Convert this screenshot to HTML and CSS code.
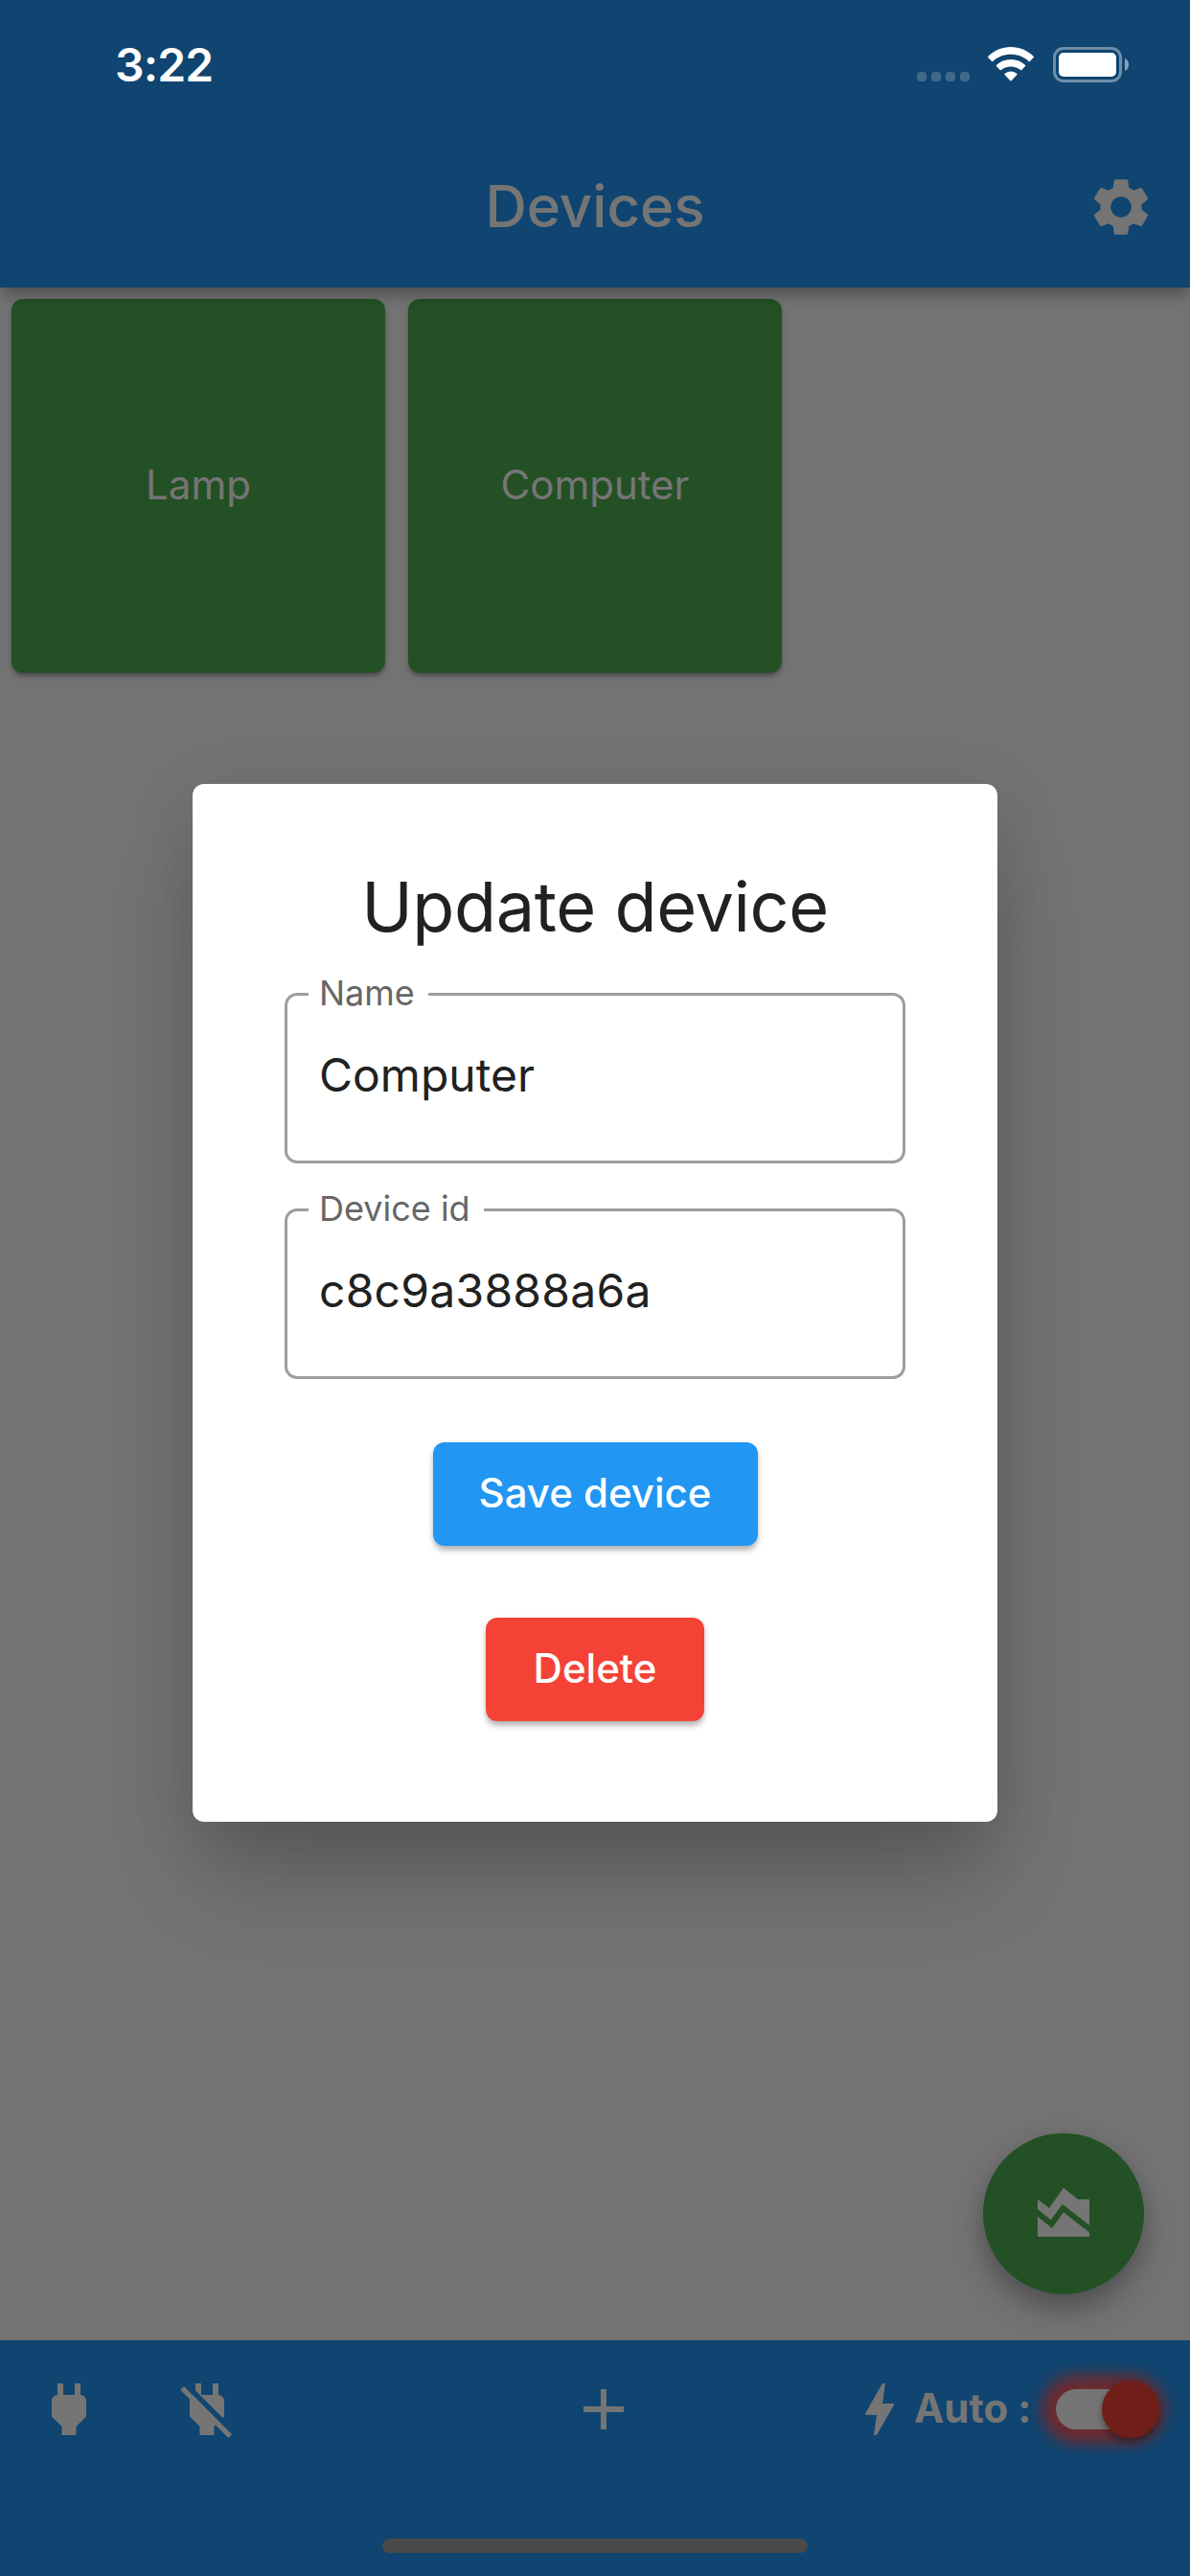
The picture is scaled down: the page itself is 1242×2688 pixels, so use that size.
FILE: index.html
```html
<!DOCTYPE html>
<html lang="en">
<head>
<meta charset="utf-8">
<title>Devices</title>
<link rel="stylesheet" href="styles.css">
</head>
<body>
<div class="app">
  <header class="app-bar">
    <span class="app-bar-side"></span>
    <h1 class="app-title">Devices</h1>
    <span class="app-bar-side app-bar-actions">
      <svg class="icon" viewBox="0 0 24 24"><path d="M19.14 12.94c.04-.3.06-.61.06-.94 0-.32-.02-.64-.07-.94l2.03-1.58c.18-.14.23-.41.12-.61l-1.92-3.32c-.12-.22-.37-.29-.59-.22l-2.39.96c-.5-.38-1.03-.7-1.62-.94l-.36-2.54c-.04-.24-.24-.41-.48-.41h-3.84c-.24 0-.43.17-.47.41l-.36 2.54c-.59.24-1.13.57-1.62.94l-2.39-.96c-.22-.08-.47 0-.59.22L2.74 8.87c-.12.21-.08.47.12.61l2.03 1.58c-.05.3-.09.63-.09.94s.02.64.07.94l-2.03 1.58c-.18.14-.23.41-.12.61l1.92 3.32c.12.22.37.29.59.22l2.39-.96c.5.38 1.03.7 1.62.94l.36 2.54c.05.24.24.41.48.41h3.84c.24 0 .44-.17.47-.41l.36-2.54c.59-.24 1.13-.56 1.62-.94l2.39.96c.22.08.47 0 .59-.22l1.92-3.32c.12-.22.07-.47-.12-.61l-2.01-1.58zM12 15.6c-1.98 0-3.6-1.62-3.6-3.6s1.62-3.6 3.6-3.6 3.6 1.62 3.6 3.6-1.62 3.6-3.6 3.6z"/></svg>
    </span>
  </header>

  <main class="device-grid">
    <button class="device-card">Lamp</button>
    <button class="device-card">Computer</button>
  </main>

  <button class="fab">
    <svg class="icon" viewBox="0 0 24 24"><path d="M3 13v7h18v-1.5l-9-7L8 17l-5-4zm0-6l4 3 5-7 5 4h4v8.970l-9.400-7.310-3.980 5.480L3 10.440V7z"/></svg>
  </button>

  <footer class="bottom-bar">
    <div class="bar-group bar-left">
      <svg class="icon" viewBox="0 0 24 24"><path d="M16.01 7L16 3h-2v4h-4V3H8v4h-.01C7 6.99 6 7.99 6 8.99v5.49L9.5 18v3h5v-3l3.5-3.51v-5.5c0-1-1-2-1.99-1.99z"/></svg>
      <svg class="icon" viewBox="0 0 24 24"><path d="M18 14.49V9c0-1-1.01-2.01-2-2V3h-2v4h-4V3H8v2.48l9.51 9.5.49-.49zm-1.76 1.77L7.2 7.2l-.01.01L3.98 4 2.71 5.25l3.36 3.36C6.04 8.74 6 8.87 6 9v5.48L9.5 18v3h5v-3l.48-.48L19.45 22l1.26-1.28-4.47-4.46z"/></svg>
    </div>
    <svg class="icon bar-add" viewBox="0 0 24 24"><path d="M19 13h-6v6h-2v-6H5v-2h6V5h2v6h6v2z"/></svg>
    <div class="bar-group bar-auto">
      <svg class="icon" viewBox="0 0 24 24"><path d="M11 21h-1l1-7H7.500c-.58 0-.57-.32-.38-.66.19-.34.05-.08.07-.12C8.48 10.94 10.42 7.54 13 3h1l-1 7h3.500c.49 0 .56.33.47.51l-.07.15C12.96 17.55 11 21 11 21z"/></svg>
      <span class="auto-label">Auto :</span>
      <span class="switch"><span class="switch-track"><span class="switch-thumb"></span></span></span>
    </div>
  </footer>
</div>

<div class="scrim">
  <section class="dialog">
    <h2 class="dialog-title">Update device</h2>
    <fieldset class="field">
      <legend class="field-label">Name</legend>
      <div class="field-value">Computer</div>
    </fieldset>
    <fieldset class="field">
      <legend class="field-label">Device id</legend>
      <div class="field-value field-value-id">c8c9a3888a6a</div>
    </fieldset>
    <button class="button button-save">Save device</button>
    <button class="button button-delete">Delete</button>
  </section>
</div>

<div class="status-bar">
  <span class="clock">3:22</span>
  <span class="status-icons">
    <span class="cell"><i></i><i></i><i></i><i></i></span>
    <svg class="wifi" viewBox="0 0 48 36"><path d="M24 0C33.200 0 41.500 3.700 47.600 9.700Q48.300 10.400 47.700 11.100L43.900 14.900Q43.300 15.400 42.700 14.900C37.700 10.400 31.200 7.800 24 7.800S10.300 10.400 5.300 14.900Q4.700 15.400 4.100 14.900L.3 11.100Q-.3 10.400.4 9.700C6.500 3.700 14.800 0 24 0Z"/><path d="M24 13C30 13 35.200 15.200 39.100 18.900Q39.700 19.500 39.100 20.100L35.300 23.900Q34.700 24.500 34.100 24C31.400 21.700 27.900 20.400 24 20.400S16.600 21.700 13.900 24Q13.300 24.500 12.700 23.900L8.900 20.100Q8.300 19.500 8.900 18.900C12.800 15.200 18 13 24 13Z"/><path d="M24 25.500C26.500 25.500 28.700 26.400 30.400 27.900Q31 28.500 30.400 29.100L24.600 35.300Q24 35.900 23.400 35.300L17.600 29.100Q17 28.500 17.600 27.900C19.300 26.400 21.500 25.500 24 25.500Z"/></svg>
    <svg class="battery" viewBox="0 0 80 37"><rect x="1.500" y="1.500" width="69" height="34" rx="9.500" fill="none" stroke="#fff" stroke-opacity=".4" stroke-width="3"/><rect x="6" y="6" width="60" height="25" rx="5"/><path d="M75 12v13c2.600-1 4-3.500 4-6.500S77.600 13 75 12z" fill-opacity=".5"/></svg>
  </span>
</div>
<div class="home-indicator"></div>
</body>
</html>
```
FILE: styles.css
```css
* { box-sizing: border-box; }
html, body { margin: 0; height: 2688px; }
body {
  position: relative;
  width: 1242px;
  overflow: hidden;
  font-family: Inter, "Liberation Sans", sans-serif;
  color: #fff;
}
h1, h2 { margin: 0; }
button { border: 0; padding: 0; font: inherit; color: inherit; }
.icon { width: 72px; height: 72px; fill: currentColor; flex: none; display: block; }

.app { display: flex; flex-direction: column; height: 2688px; background: #fafafa; }

.app-bar {
  position: relative;
  z-index: 1;
  height: 300px;
  padding: 132px 36px 0;
  display: flex;
  align-items: center;
  background: #2196f3;
  box-shadow: 0 12px 15px -3px rgba(0,0,0,.22), 0 4px 14px -2px rgba(0,0,0,.16);
}
.app-bar-side { flex: 1; display: flex; justify-content: flex-end; }
.app-title { padding-bottom: 2px; font-size: 60px; line-height: 72px; font-weight: 500; }

.device-grid {
  flex: 1;
  display: grid;
  grid-template-columns: repeat(3, 390px);
  gap: 24px;
  align-content: start;
  padding: 12px;
}
.device-card {
  height: 390px;
  padding-bottom: 3px;
  border-radius: 12px;
  background: #4caf50;
  font-size: 42px;
  box-shadow: 0 4px 5px -1px rgba(0,0,0,.3), 0 2px 6px rgba(0,0,0,.12);
}

.fab {
  position: absolute;
  left: 1026px;
  top: 2226px;
  width: 168px;
  height: 168px;
  border-radius: 50%;
  display: flex;
  align-items: center;
  justify-content: center;
  background: #4caf50;
  box-shadow: 0 18px 30px rgba(0,0,0,.22), 0 6px 24px rgba(0,0,0,.13);
}

.bottom-bar {
  position: relative;
  height: 246px;
  padding: 36px 32px 0 36px;
  display: grid;
  grid-template-columns: 558px 72px 1fr;
  align-items: start;
  background: #2196f3;
}
.bar-group { display: flex; align-items: center; height: 72px; }
.bar-left { gap: 72px; }
.bar-auto { justify-content: flex-end; }
.auto-label { width: 123px; padding-bottom: 3px; font-size: 42px; font-weight: 700; white-space: nowrap; }
.switch {
  margin-left: 15px;
  width: 118px;
  height: 66px;
  padding: 12px 9px;
}
.switch-track {
  display: flex;
  align-items: center;
  justify-content: flex-end;
  width: 99px;
  height: 42px;
  margin-left: 1px;
  border-radius: 21px;
  background: #fff;
  box-shadow: 0 0 15px 15px rgba(250,88,94,.94);
}
.switch-thumb {
  flex: none;
  width: 60px;
  height: 60px;
  margin-right: -9px;
  border-radius: 50%;
  background: #f44336;
  box-shadow: 0 4px 8px rgba(0,0,0,.4);
}

.scrim {
  position: absolute;
  inset: 0;
  z-index: 2;
  display: flex;
  justify-content: center;
  align-items: flex-start;
  padding-top: 817.5px;
  background: rgba(0,0,0,.54);
}
.dialog {
  width: 840px;
  height: 1083px;
  padding: 84px 96px 0;
  display: flex;
  flex-direction: column;
  align-items: center;
  border-radius: 12px;
  background: #fff;
  color: #212121;
  box-shadow: 0 66px 90px -14px rgba(0,0,0,.2), 0 16px 70px 0 rgba(0,0,0,.1);
}
.dialog-title { font-size: 72px; line-height: 87px; font-weight: 400; letter-spacing: -.4px; white-space: nowrap; }
.field {
  width: 648px;
  height: 188px;
  flex: none;
  margin: 37px 0 0;
  padding: 0 33px;
  border: 3px solid #9e9e9e;
  border-radius: 13px;
}
.field-label { height: 24px; margin-left: -11px; padding: 0 14px 0 11px; font-size: 36px; line-height: 21px; color: #666; white-space: nowrap; }
.field-value { margin-top: 43px; font-size: 48px; line-height: 58px; }
.field-value-id { letter-spacing: .25px; }
.button {
  height: 108px;
  flex: none;
  padding-bottom: 3px;
  border-radius: 12px;
  color: #fff;
  font-size: 42px;
  font-weight: 500;
  white-space: nowrap;
  box-shadow: 0 6px 6px -1px rgba(0,0,0,.22), 0 2px 6px rgba(0,0,0,.14);
}
.button-save { width: 339px; margin-top: 66px; background: #2196f3; }
.button-delete { width: 228px; margin-top: 75px; background: #f44336; }

.status-bar {
  position: absolute;
  z-index: 3;
  inset: 0 0 auto 0;
  height: 132px;
  padding: 38px 63px 0 120px;
  display: flex;
  justify-content: space-between;
}
.clock { font-size: 48px; line-height: 60px; font-weight: 600; letter-spacing: -.8px; }
.status-icons { display: flex; align-items: flex-end; gap: 20px; height: 48px; fill: #fff; }
.cell { display: flex; gap: 5px; margin: 0 -1px 1px 0; }
.cell i { width: 10px; height: 10px; border-radius: 3.5px; background: rgba(255,255,255,.2); }
.wifi { width: 48px; height: 36px; margin-bottom: 1px; }
.battery { width: 80px; height: 37px; }
.home-indicator {
  position: absolute;
  z-index: 3;
  left: 399px;
  top: 2649px;
  width: 444px;
  height: 15px;
  border-radius: 8px;
  background: #4a4a4a;
}
```
